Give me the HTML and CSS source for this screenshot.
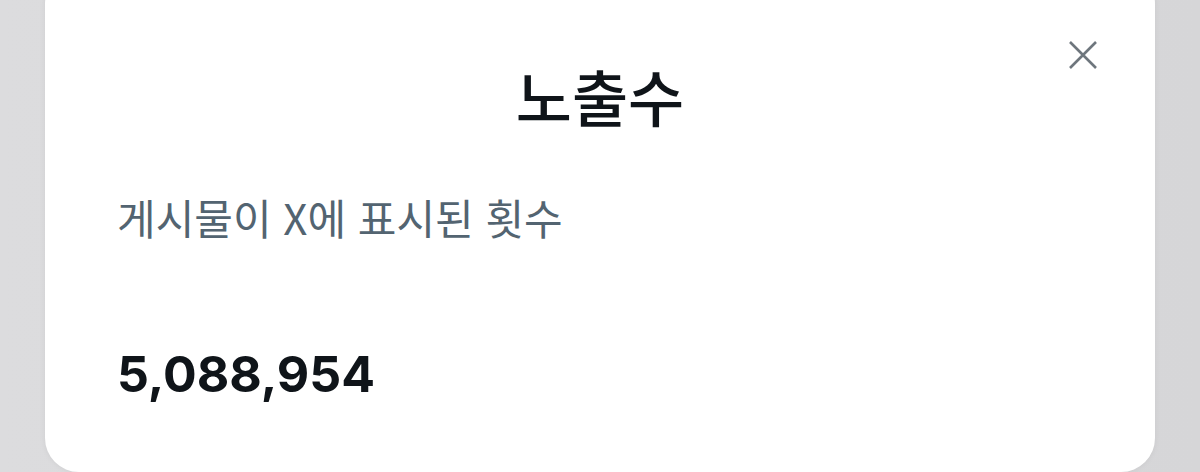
FILE: index.html
```html
<!DOCTYPE html>
<html lang="ko">
<head>
<meta charset="utf-8">
<link rel="stylesheet" href="styles.css">
</head>
<body>
<div class="backdrop">
  <div class="card">
    <div class="header">
      <h1 class="title">노출수</h1>
      <button class="close" aria-label="닫기">
        <svg viewBox="0 0 30 30" width="30" height="30"><path d="M2 2 L28 28 M28 2 L2 28" stroke="#6e767d" stroke-width="2.6" fill="none"/></svg>
      </button>
    </div>
    <p class="desc">게시물이 X에 표시된 횟수</p>
    <p class="count">5,088,954</p>
  </div>
</div>
</body>
</html>
```

FILE: styles.css
```css
html, body {
  margin: 0;
  padding: 0;
  height: 100%;
  overflow: hidden;
}
body {
  background: linear-gradient(90deg, #dcdcde 0%, #d6d6d8 100%);
}
.backdrop {
  padding: 0 45px;
  height: 100%;
}
.card {
  margin-top: -30px;
  height: 502px;
  background: #ffffff;
  border-radius: 34px;
  box-shadow: 0 0 6px rgba(0,0,0,0.06);
  padding: 0 72px;
  box-sizing: border-box;
}
.header {
  position: relative;
  display: flex;
  justify-content: center;
  padding-top: 90px;
}
.title {
  margin: 0;
  font-family: "Noto Sans CJK KR", "Noto Sans", sans-serif;
  font-weight: 500;
  font-size: 61px;
  line-height: 72px;
  color: #0f1419;
}
.close {
  position: absolute;
  right: -15px;
  top: 70px;
  width: 30px;
  height: 30px;
  padding: 0;
  border: 0;
  background: none;
}
.close svg { display: block; }
.desc {
  margin: 60px 0 0;
  font-family: "Noto Sans CJK KR", "Noto Sans", sans-serif;
  font-size: 42px;
  line-height: 50px;
  color: #536471;
}
.count {
  margin: 102px 0 0;
  font-family: Inter, "Liberation Sans", sans-serif;
  font-weight: 700;
  font-size: 50px;
  line-height: 60px;
  color: #0f1419;
}
```
